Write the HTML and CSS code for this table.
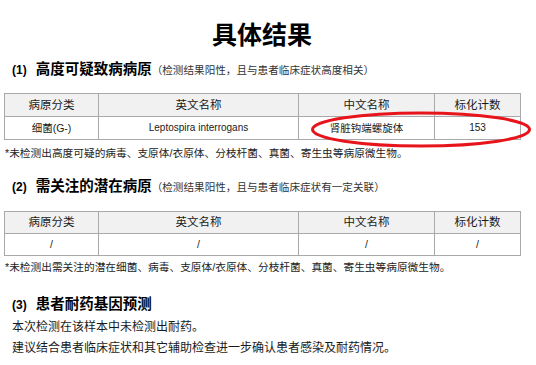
FILE: index.html
```html
<!DOCTYPE html>
<html lang="zh">
<head>
<meta charset="utf-8">
<link rel="stylesheet" href="styles.css">
</head>
<body>
<div class="page">
  <h1 class="title">具体结果</h1>

  <h2 class="sec sec1"><span class="num">(1)</span><span class="sec-name">高度可疑致病病原</span><span class="sub">（检测结果阳性，且与患者临床症状高度相关）</span></h2>
  <div class="table-wrap t1">
    <table class="res">
      <colgroup><col class="c1"><col class="c2"><col class="c3"><col class="c4"></colgroup>
      <thead><tr><th>病原分类</th><th>英文名称</th><th>中文名称</th><th>标化计数</th></tr></thead>
      <tbody><tr><td>细菌(G-)</td><td class="latin">Leptospira interrogans</td><td>肾脏钩端螺旋体</td><td class="latin">153</td></tr></tbody>
    </table>
    <svg class="ring" width="224" height="40" viewBox="0 0 224 40" aria-hidden="true">
      <ellipse cx="112" cy="19.5" rx="108.5" ry="16.5" fill="none" stroke="#e8141b" stroke-width="3"/>
    </svg>
  </div>
  <p class="note n1">*未检测出高度可疑的病毒、支原体/衣原体、分枝杆菌、真菌、寄生虫等病原微生物。</p>

  <h2 class="sec sec2"><span class="num">(2)</span><span class="sec-name">需关注的潜在病原</span><span class="sub">（检测结果阳性，且与患者临床症状有一定关联）</span></h2>
  <div class="table-wrap t2">
    <table class="res small">
      <colgroup><col class="c1"><col class="c2"><col class="c3"><col class="c4"></colgroup>
      <thead><tr><th>病原分类</th><th>英文名称</th><th>中文名称</th><th>标化计数</th></tr></thead>
      <tbody><tr><td>/</td><td>/</td><td>/</td><td>/</td></tr></tbody>
    </table>
  </div>
  <p class="note n2">*未检测出需关注的潜在细菌、病毒、支原体/衣原体、分枝杆菌、真菌、寄生虫等病原微生物。</p>

  <h2 class="sec sec3"><span class="num">(3)</span><span class="sec-name">患者耐药基因预测</span></h2>
  <p class="body-line">本次检测在该样本中未检测出耐药。</p>
  <p class="body-line">建议结合患者临床症状和其它辅助检查进一步确认患者感染及耐药情况。</p>
</div>
</body>
</html>
```

FILE: styles.css
```css
html, body {
  margin: 0;
  padding: 0;
  background: #ffffff;
}

body {
  font-family: "Liberation Sans", "Noto Sans CJK SC", sans-serif;
  color: #1a1a1a;
}

.page {
  width: 516px;
  padding: 20px 16px 0 4px;
}

.title {
  margin: 0 0 9px;
  height: 30px;
  line-height: 30px;
  font-size: 25px;
  font-weight: 700;
  text-align: center;
  color: #000;
}

.sec {
  display: flex;
  align-items: baseline;
  margin: 0;
  height: 20px;
  line-height: 20px;
  padding-left: 8px;
  font-weight: 700;
  color: #000;
}

.num {
  font-size: 12px;
  margin-right: 9px;
}

.sec-name {
  font-size: 14.5px;
}

.sub {
  font-size: 10.6px;
  font-weight: 400;
  color: #333;
}

.sec2 { margin-top: 15px; }
.sec3 { margin-top: 19px; }

.table-wrap {
  position: relative;
  margin-top: 14px;
}

.t2 { margin-top: 15px; }

.res {
  width: 516px;
  border-collapse: collapse;
  table-layout: fixed;
}

.c1 { width: 94px; }
.c2 { width: 200px; }
.c3 { width: 136px; }
.c4 { width: 86px; }

.res th,
.res td {
  border: 1px solid #a9a9a9;
  text-align: center;
  padding: 0;
  height: 22px;
  line-height: 22px;
  color: #1a1a1a;
}

.res.small th,
.res.small td {
  height: 21px;
  line-height: 21px;
}

.res th {
  background: #f1f1f1;
  font-weight: 400;
  font-size: 11.5px;
}

.res td {
  font-size: 10.5px;
}

.res td.latin {
  font-size: 10px;
}

.ring {
  position: absolute;
  left: 305px;
  top: 17px;
}

.note {
  margin: 5px 0 0 1px;
  height: 16px;
  line-height: 16px;
  font-size: 10.7px;
  color: #222;
}

.n2 { margin-top: 3px; }

.body-line {
  margin: 0;
  padding-left: 8px;
  height: 21px;
  line-height: 21px;
  font-size: 12px;
  color: #1a1a1a;
}

.sec3 + .body-line {
  margin-top: 3px;
}
```
